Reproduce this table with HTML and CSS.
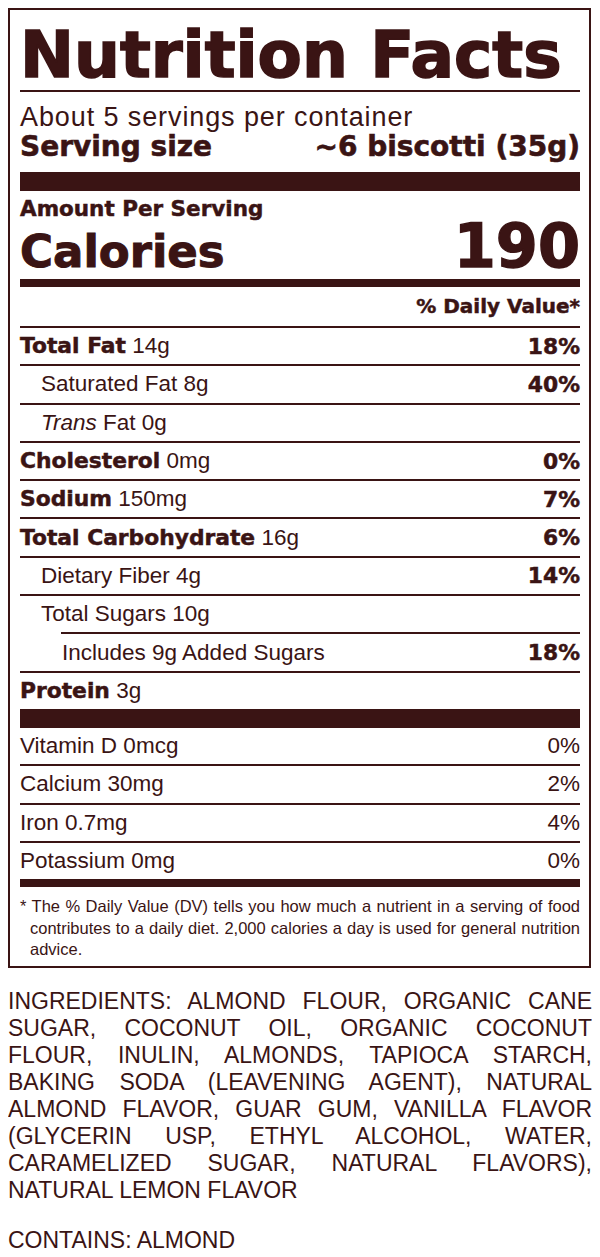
FILE: index.html
```html
<!DOCTYPE html>
<html>
<head>
<meta charset="utf-8">
<link rel="stylesheet" href="styles.css">
</head>
<body>
<div class="label">
  <h1 class="title">Nutrition Facts</h1>
  <div class="rule-thin"></div>
  <div class="servings">About 5 servings per container</div>
  <div class="serving-size"><span>Serving size</span><span>~6 biscotti (35g)</span></div>
  <div class="bar-thick"></div>
  <div class="amount">Amount Per Serving</div>
  <div class="calories"><span class="cal-label">Calories</span><span class="cal-num">190</span></div>
  <div class="bar-mid"></div>
  <div class="dv-head">% Daily Value*</div>
  <div class="row line"><span><b>Total Fat</b> 14g</span><b>18%</b></div>
  <div class="row line indent1"><span>Saturated Fat 8g</span><b>40%</b></div>
  <div class="row line indent1"><span><i>Trans</i> Fat 0g</span></div>
  <div class="row line"><span><b>Cholesterol</b> 0mg</span><b>0%</b></div>
  <div class="row line"><span><b>Sodium</b> 150mg</span><b>7%</b></div>
  <div class="row line"><span><b>Total Carbohydrate</b> 16g</span><b>6%</b></div>
  <div class="row line indent1"><span>Dietary Fiber 4g</span><b>14%</b></div>
  <div class="row indent1"><span>Total Sugars 10g</span></div>
  <div class="rule-indent"></div>
  <div class="row line indent2"><span>Includes 9g Added Sugars</span><b>18%</b></div>
  <div class="row"><span><b>Protein</b> 3g</span></div>
  <div class="bar-thick bar-flush"></div>
  <div class="row line"><span>Vitamin D 0mcg</span><span>0%</span></div>
  <div class="row line"><span>Calcium 30mg</span><span>2%</span></div>
  <div class="row line"><span>Iron 0.7mg</span><span>4%</span></div>
  <div class="row"><span>Potassium 0mg</span><span>0%</span></div>
  <div class="bar-mid bar-flush"></div>
  <p class="footnote">* The % Daily Value (DV) tells you how much a nutrient in a serving of food contributes to a daily diet. 2,000 calories a day is used for general nutrition advice.</p>
</div>
<p class="ingredients">INGREDIENTS: ALMOND FLOUR, ORGANIC CANE SUGAR, COCONUT OIL, ORGANIC COCONUT FLOUR, INULIN, ALMONDS, TAPIOCA STARCH, BAKING SODA (LEAVENING AGENT), NATURAL ALMOND FLAVOR, GUAR GUM, VANILLA FLAVOR (GLYCERIN USP, ETHYL ALCOHOL, WATER, CARAMELIZED SUGAR, NATURAL FLAVORS), NATURAL LEMON FLAVOR</p>
<p class="contains">CONTAINS: ALMOND</p>
</body>
</html>
```
FILE: styles.css
```css
body {
  margin: 8px;
  font-family: "Liberation Sans", Arial, sans-serif;
  color: #3a1414;
  background: #fff;
}
.label {
  border: 2px solid #3a1414;
  padding: 0 9px 0 10px;
  width: 560px;
}
.title {
  margin: 0;
  padding-top: 10px;
  font-family: "DejaVu Sans", sans-serif;
  font-weight: 700;
  font-size: 64.5px;
  line-height: 70px;
  white-space: nowrap;
  -webkit-text-stroke: 1.6px #3a1414;
}
.rule-thin {
  height: 2px;
  background: #3a1414;
}
.servings {
  font-size: 27px;
  line-height: 28px;
  letter-spacing: 0.9px;
  margin-top: 10.5px;
  white-space: nowrap;
}
.serving-size {
  display: flex;
  justify-content: space-between;
  font-family: "DejaVu Sans", sans-serif;
  font-weight: 700;
  font-size: 28px;
  line-height: 32px;
  white-space: nowrap;
  -webkit-text-stroke: 0.6px #3a1414;
}
.bar-thick {
  height: 19px;
  background: #3a1414;
  margin-top: 9px;
}
.amount {
  font-family: "DejaVu Sans", sans-serif;
  font-weight: 700;
  font-size: 21.5px;
  line-height: 24px;
  margin-top: 6.5px;
  -webkit-text-stroke: 0.5px #3a1414;
}
.calories {
  display: flex;
  justify-content: space-between;
  align-items: baseline;
  height: 50px;
  font-family: "DejaVu Sans", sans-serif;
  font-weight: 700;
  -webkit-text-stroke: 1px #3a1414;
}
.cal-label {
  font-size: 45px;
  line-height: 40px;
}
.cal-num {
  font-size: 60.5px;
  line-height: 50px;
  -webkit-text-stroke: 1.4px #3a1414;
}
.bar-mid {
  height: 8px;
  background: #3a1414;
  margin-top: 7.5px;
}
.bar-flush {
  margin-top: 0;
}
.dv-head {
  text-align: right;
  font-family: "DejaVu Sans", sans-serif;
  font-weight: 700;
  font-size: 20px;
  line-height: 39.5px;
  border-bottom: 2px solid #3a1414;
  -webkit-text-stroke: 0.5px #3a1414;
}
.row {
  display: flex;
  justify-content: space-between;
  align-items: center;
  height: 36.3px;
  font-size: 22.5px;
  white-space: nowrap;
}
.row b {
  font-family: "DejaVu Sans", sans-serif;
  font-weight: 700;
  font-size: 21.8px;
  -webkit-text-stroke: 0.5px #3a1414;
}
.row.line {
  border-bottom: 2px solid #3a1414;
}
.indent1 > span:first-child {
  padding-left: 21px;
}
.indent2 > span:first-child {
  padding-left: 42px;
}
.rule-indent {
  height: 2px;
  margin-left: 41px;
  background: #3a1414;
}
.footnote {
  margin: 0;
  padding: 9px 0 5px 10px;
  text-indent: -10px;
  text-align: justify;
  font-size: 16.5px;
  line-height: 21.5px;
}
.ingredients {
  margin: 20px 0 0 0;
  width: 584px;
  text-align: justify;
  font-size: 23px;
  line-height: 27px;
}
.contains {
  margin: 23px 0 0 0;
  font-size: 23px;
  line-height: 27px;
}
```
